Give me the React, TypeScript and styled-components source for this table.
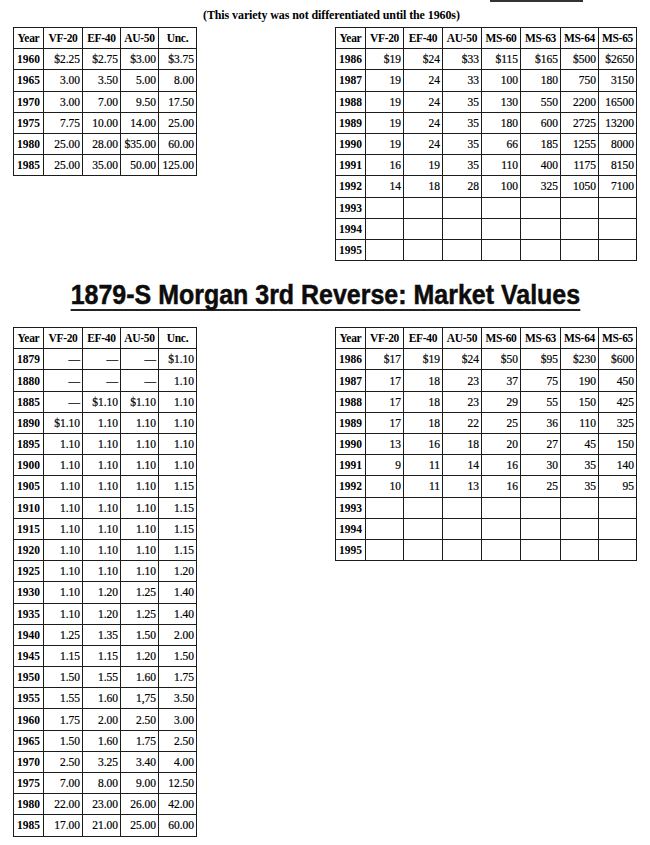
import styled, { createGlobalStyle } from 'styled-components'

type Row = { year: string; values: string[] }

const GlobalStyle = createGlobalStyle`
  html, body {
    margin: 0;
    padding: 0;
    background: #fff;
  }
  body {
    font-family: "Liberation Serif", "Times New Roman", serif;
    color: #000;
  }
`

const Page = styled.div`
  width: 650px;
  height: 845px;
  overflow: hidden;
  background: #fff;
`

const TopRule = styled.div`
  margin-left: 490px;
  width: 93px;
  height: 2px;
  background: #333;
`

const Note = styled.p`
  margin: 0;
  padding: 6px 0 0 203px;
  height: 19px;
  font-size: 12px;
  line-height: 14px;
  font-weight: bold;
  letter-spacing: -0.1px;
`

const Spread = styled.div`
  display: flex;
  justify-content: space-between;
  align-items: flex-start;
  padding: 0 13px;
`

const TitleWrap = styled.div`
  display: flex;
  justify-content: center;
  padding: 20px 0 16px;
`

const Title = styled.h1`
  margin: 0;
  padding: 0;
  font-family: "Liberation Sans", Arial, sans-serif;
  font-size: 27px;
  line-height: 28px;
  font-weight: bold;
  color: #0c0c0c;
  -webkit-text-stroke: 0.5px #0c0c0c;
  border-bottom: 2px solid #222;
  transform: scaleX(0.925);
  white-space: nowrap;
`

const DataTable = styled.table<{ $width: number }>`
  width: ${(p) => p.$width}px;
  table-layout: fixed;
  border-collapse: collapse;
  border: 1.5px solid #111;
  font-size: 11.5px;

  td,
  th {
    height: 20.2px;
    border: 1px solid #1c1c1c;
    padding: 0;
    white-space: nowrap;
    overflow: hidden;
  }
`

const HeadCell = styled.th`
  font-weight: bold;
  text-align: center;
  letter-spacing: -0.3px;
`

const YearCell = styled.td`
  font-weight: bold;
  text-align: left;
  padding-left: 3px !important;
`

const ValueCell = styled.td`
  text-align: right;
  padding-right: 2px !important;
  color: #000;
  -webkit-text-stroke: 0.2px #000;
`

const shortCols = ['VF-20', 'EF-40', 'AU-50', 'Unc.']
const longCols = ['VF-20', 'EF-40', 'AU-50', 'MS-60', 'MS-63', 'MS-64', 'MS-65']
const shortWidths = [30, 39, 38, 38, 38]
const longWidths = [30, 38, 39, 39, 39, 40, 38, 38]

const rows = (data: string[]): Row[] =>
  data.map((line) => {
    const [year, ...values] = line.split(' ')
    return { year, values }
  })

const earlyTop = rows([
  '1960 $2.25 $2.75 $3.00 $3.75',
  '1965 3.00 3.50 5.00 8.00',
  '1970 3.00 7.00 9.50 17.50',
  '1975 7.75 10.00 14.00 25.00',
  '1980 25.00 28.00 $35.00 60.00',
  '1985 25.00 35.00 50.00 125.00',
])

const lateTop = rows([
  '1986 $19 $24 $33 $115 $165 $500 $2650',
  '1987 19 24 33 100 180 750 3150',
  '1988 19 24 35 130 550 2200 16500',
  '1989 19 24 35 180 600 2725 13200',
  '1990 19 24 35 66 185 1255 8000',
  '1991 16 19 35 110 400 1175 8150',
  '1992 14 18 28 100 325 1050 7100',
  '1993',
  '1994',
  '1995',
])

const earlyBottom = rows([
  '1879 — — — $1.10',
  '1880 — — — 1.10',
  '1885 — $1.10 $1.10 1.10',
  '1890 $1.10 1.10 1.10 1.10',
  '1895 1.10 1.10 1.10 1.10',
  '1900 1.10 1.10 1.10 1.10',
  '1905 1.10 1.10 1.10 1.15',
  '1910 1.10 1.10 1.10 1.15',
  '1915 1.10 1.10 1.10 1.15',
  '1920 1.10 1.10 1.10 1.15',
  '1925 1.10 1.10 1.10 1.20',
  '1930 1.10 1.20 1.25 1.40',
  '1935 1.10 1.20 1.25 1.40',
  '1940 1.25 1.35 1.50 2.00',
  '1945 1.15 1.15 1.20 1.50',
  '1950 1.50 1.55 1.60 1.75',
  '1955 1.55 1.60 1,75 3.50',
  '1960 1.75 2.00 2.50 3.00',
  '1965 1.50 1.60 1.75 2.50',
  '1970 2.50 3.25 3.40 4.00',
  '1975 7.00 8.00 9.00 12.50',
  '1980 22.00 23.00 26.00 42.00',
  '1985 17.00 21.00 25.00 60.00',
])

const lateBottom = rows([
  '1986 $17 $19 $24 $50 $95 $230 $600',
  '1987 17 18 23 37 75 190 450',
  '1988 17 18 23 29 55 150 425',
  '1989 17 18 22 25 36 110 325',
  '1990 13 16 18 20 27 45 150',
  '1991 9 11 14 16 30 35 140',
  '1992 10 11 13 16 25 35 95',
  '1993',
  '1994',
  '1995',
])

function ValueTable({ cols, widths, data }: { cols: string[]; widths: number[]; data: Row[] }) {
  const total = widths.reduce((a, b) => a + b, 0)
  return (
    <DataTable $width={total}>
      <colgroup>
        {widths.map((w, i) => (
          <col key={i} style={{ width: w }} />
        ))}
      </colgroup>
      <thead>
        <tr>
          <HeadCell>Year</HeadCell>
          {cols.map((c) => (
            <HeadCell key={c}>{c}</HeadCell>
          ))}
        </tr>
      </thead>
      <tbody>
        {data.map((row) => (
          <tr key={row.year}>
            <YearCell>{row.year}</YearCell>
            {cols.map((c, i) => (
              <ValueCell key={c}>{row.values[i] ?? ''}</ValueCell>
            ))}
          </tr>
        ))}
      </tbody>
    </DataTable>
  )
}

export default function App() {
  return (
    <Page>
      <GlobalStyle />
      <TopRule />
      <Note>(This variety was not differentiated until the 1960s)</Note>
      <Spread>
        <ValueTable cols={shortCols} widths={shortWidths} data={earlyTop} />
        <ValueTable cols={longCols} widths={longWidths} data={lateTop} />
      </Spread>
      <TitleWrap>
        <Title>1879-S Morgan 3rd Reverse: Market Values</Title>
      </TitleWrap>
      <Spread>
        <ValueTable cols={shortCols} widths={shortWidths} data={earlyBottom} />
        <ValueTable cols={longCols} widths={longWidths} data={lateBottom} />
      </Spread>
    </Page>
  )
}
